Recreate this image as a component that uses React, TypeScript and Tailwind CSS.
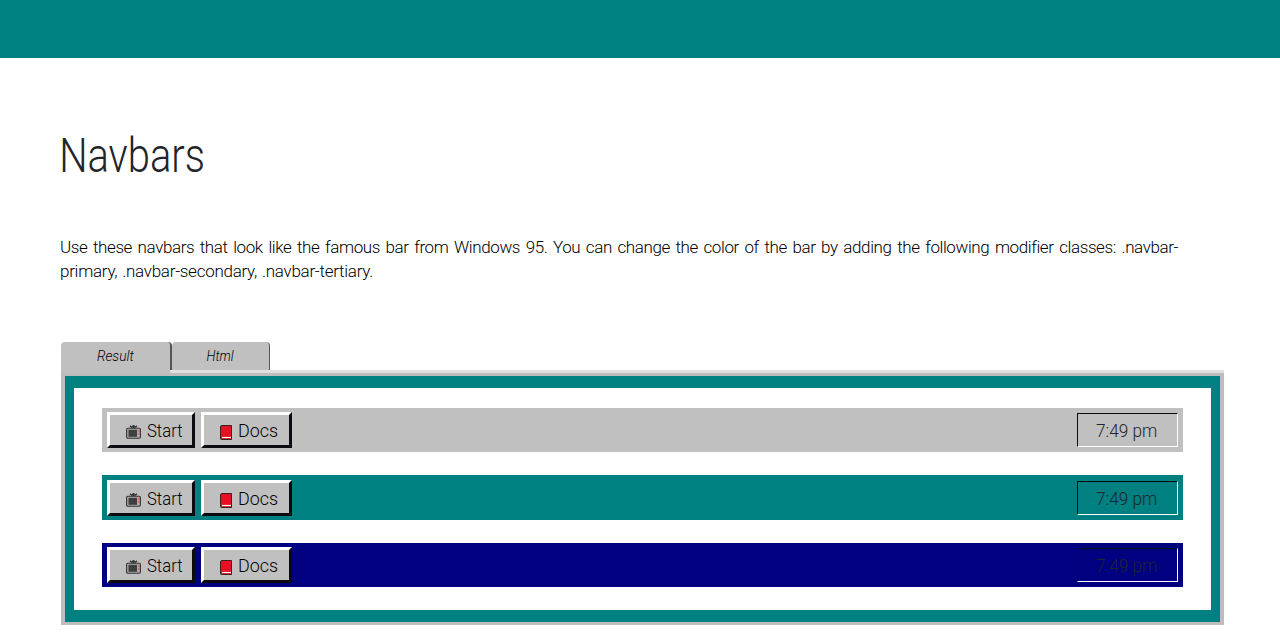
import React from "react";

const font = "font-['Roboto','Liberation_Sans',sans-serif]";

function TvIcon() {
  return (
    <svg width="15" height="15" viewBox="0 0 15 15" className="shrink-0">
      <path d="M4 .8l1.5 1.4L7.2.8v2.4M7.8 3.2V.8l1.7 1.4L11 .8" fill="none" stroke="#333" strokeWidth="1.3" />
      <rect x=".6" y="3.3" width="13.8" height="10" rx="1.2" fill="#aaa" stroke="#333" strokeWidth="1.1" />
      <rect x="2.5" y="4.8" width="8.5" height="7" fill="#3f3f3f" />
      <rect x="12" y="5" width="1.6" height="1.7" fill="#ea5a47" />
      <rect x="12" y="8" width="1.6" height="1.5" fill="#ea5a47" />
    </svg>
  );
}

function BookIcon() {
  return (
    <svg width="12" height="15" viewBox="0 0 12 15" className="shrink-0">
      <path d="M2 .5h9.5v14H1.5a1 1 0 0 1-1-1V2A1.5 1.5 0 0 1 2 .5z" fill="#e81123" stroke="#3a2020" />
      <path d="M2 12.5H11" stroke="#fff" strokeWidth="1.2" />
    </svg>
  );
}

const button =
  "flex h-9 border-[3px] border-t-white border-l-white border-r-[#0a0a10] border-b-[#0a0a10] bg-[#c0c0c0] text-[18.5px] leading-[32px] font-light whitespace-nowrap text-black";

function Navbar({ className }: { className: string }) {
  return (
    <nav className={`flex justify-between pr-[5px] pl-[5px] ${className}`}>
      <div className="flex gap-[6px]">
        <button className={`${button} w-[88px] pl-4`}>
          <span className="mt-[10px] mr-[6px]"><TvIcon /></span>
          <span className="origin-left scale-x-[0.9]">Start</span>
        </button>
        <button className={`${button} w-[91px] pl-4`}>
          <span className="mt-[10px] mr-[6px]"><BookIcon /></span>
          <span className="origin-left scale-x-[0.97]">Docs</span>
        </button>
      </div>
      <div className="mt-px h-[34px] w-[101px] border border-t-[#0a0a10] border-r-white border-b-white border-l-[#0a0a10] pl-[18px] text-[18.5px] leading-[35px] font-light whitespace-nowrap text-[#212529]">
        <span className="inline-block origin-left scale-x-[0.93]">7:49 pm</span>
      </div>
    </nav>
  );
}

export default function App() {
  return (
    <div className={`h-[640px] overflow-hidden bg-white text-[#212529] ${font}`}>
      <header className="h-[58px] bg-[#008080]" />
      <main className="px-[60px]">
        <h1 className="mt-[70px] h-[58px] text-[47.5px] leading-[56px] font-light whitespace-nowrap">
          <span className="inline-block origin-left scale-x-[0.84] -indent-px">Navbars</span>
        </h1>
        <div className="mt-[49px] w-[1118px] text-[17px] leading-6 font-light whitespace-nowrap text-black">
          <p className="tracking-[-0.4px] [text-align-last:justify] [word-spacing:1.5px]">
            Use these navbars that look like the famous bar from Windows 95. You can change the color of the bar by adding the following modifier classes: .navbar-
          </p>
          <p className="tracking-[-0.27px] [word-spacing:1px]">primary, .navbar-secondary, .navbar-tertiary.</p>
        </div>
        <section className="mt-[59px] ml-px w-[1163px]">
          <div className="flex h-7 text-center text-[14.5px] leading-[29px] font-light text-black italic">
            <div className="h-7 w-[111px] rounded-t-[4px] border-r-2 border-[#555] bg-[#c0c0c0]"><span className="inline-block scale-x-[0.95]">Result</span></div>
            <div className="w-[98px] rounded-t-[4px] border-r border-[#555] bg-[#c0c0c0]"><span className="inline-block scale-x-[0.9]">Html</span></div>
          </div>
          <div className="flex">
            <div className="h-[3px] w-[109px] bg-[#c0c0c0]" />
            <div className="h-[3px] flex-1 bg-[#dfdfdf]" />
          </div>
          <div className="h-[252px] border-x-4 border-y-[3px] border-[#bdbdbd]">
            <div className="h-[246px] border-x-[9px] border-y-[12px] border-[#008080] bg-white px-7 pt-5">
              <Navbar className="h-11 bg-[#c0c0c0] pt-1" />
              <Navbar className="mt-[23px] h-[45px] bg-[#008080] pt-[5px]" />
              <Navbar className="mt-[23px] h-11 bg-[#000080] pt-1" />
            </div>
          </div>
        </section>
      </main>
    </div>
  );
}
